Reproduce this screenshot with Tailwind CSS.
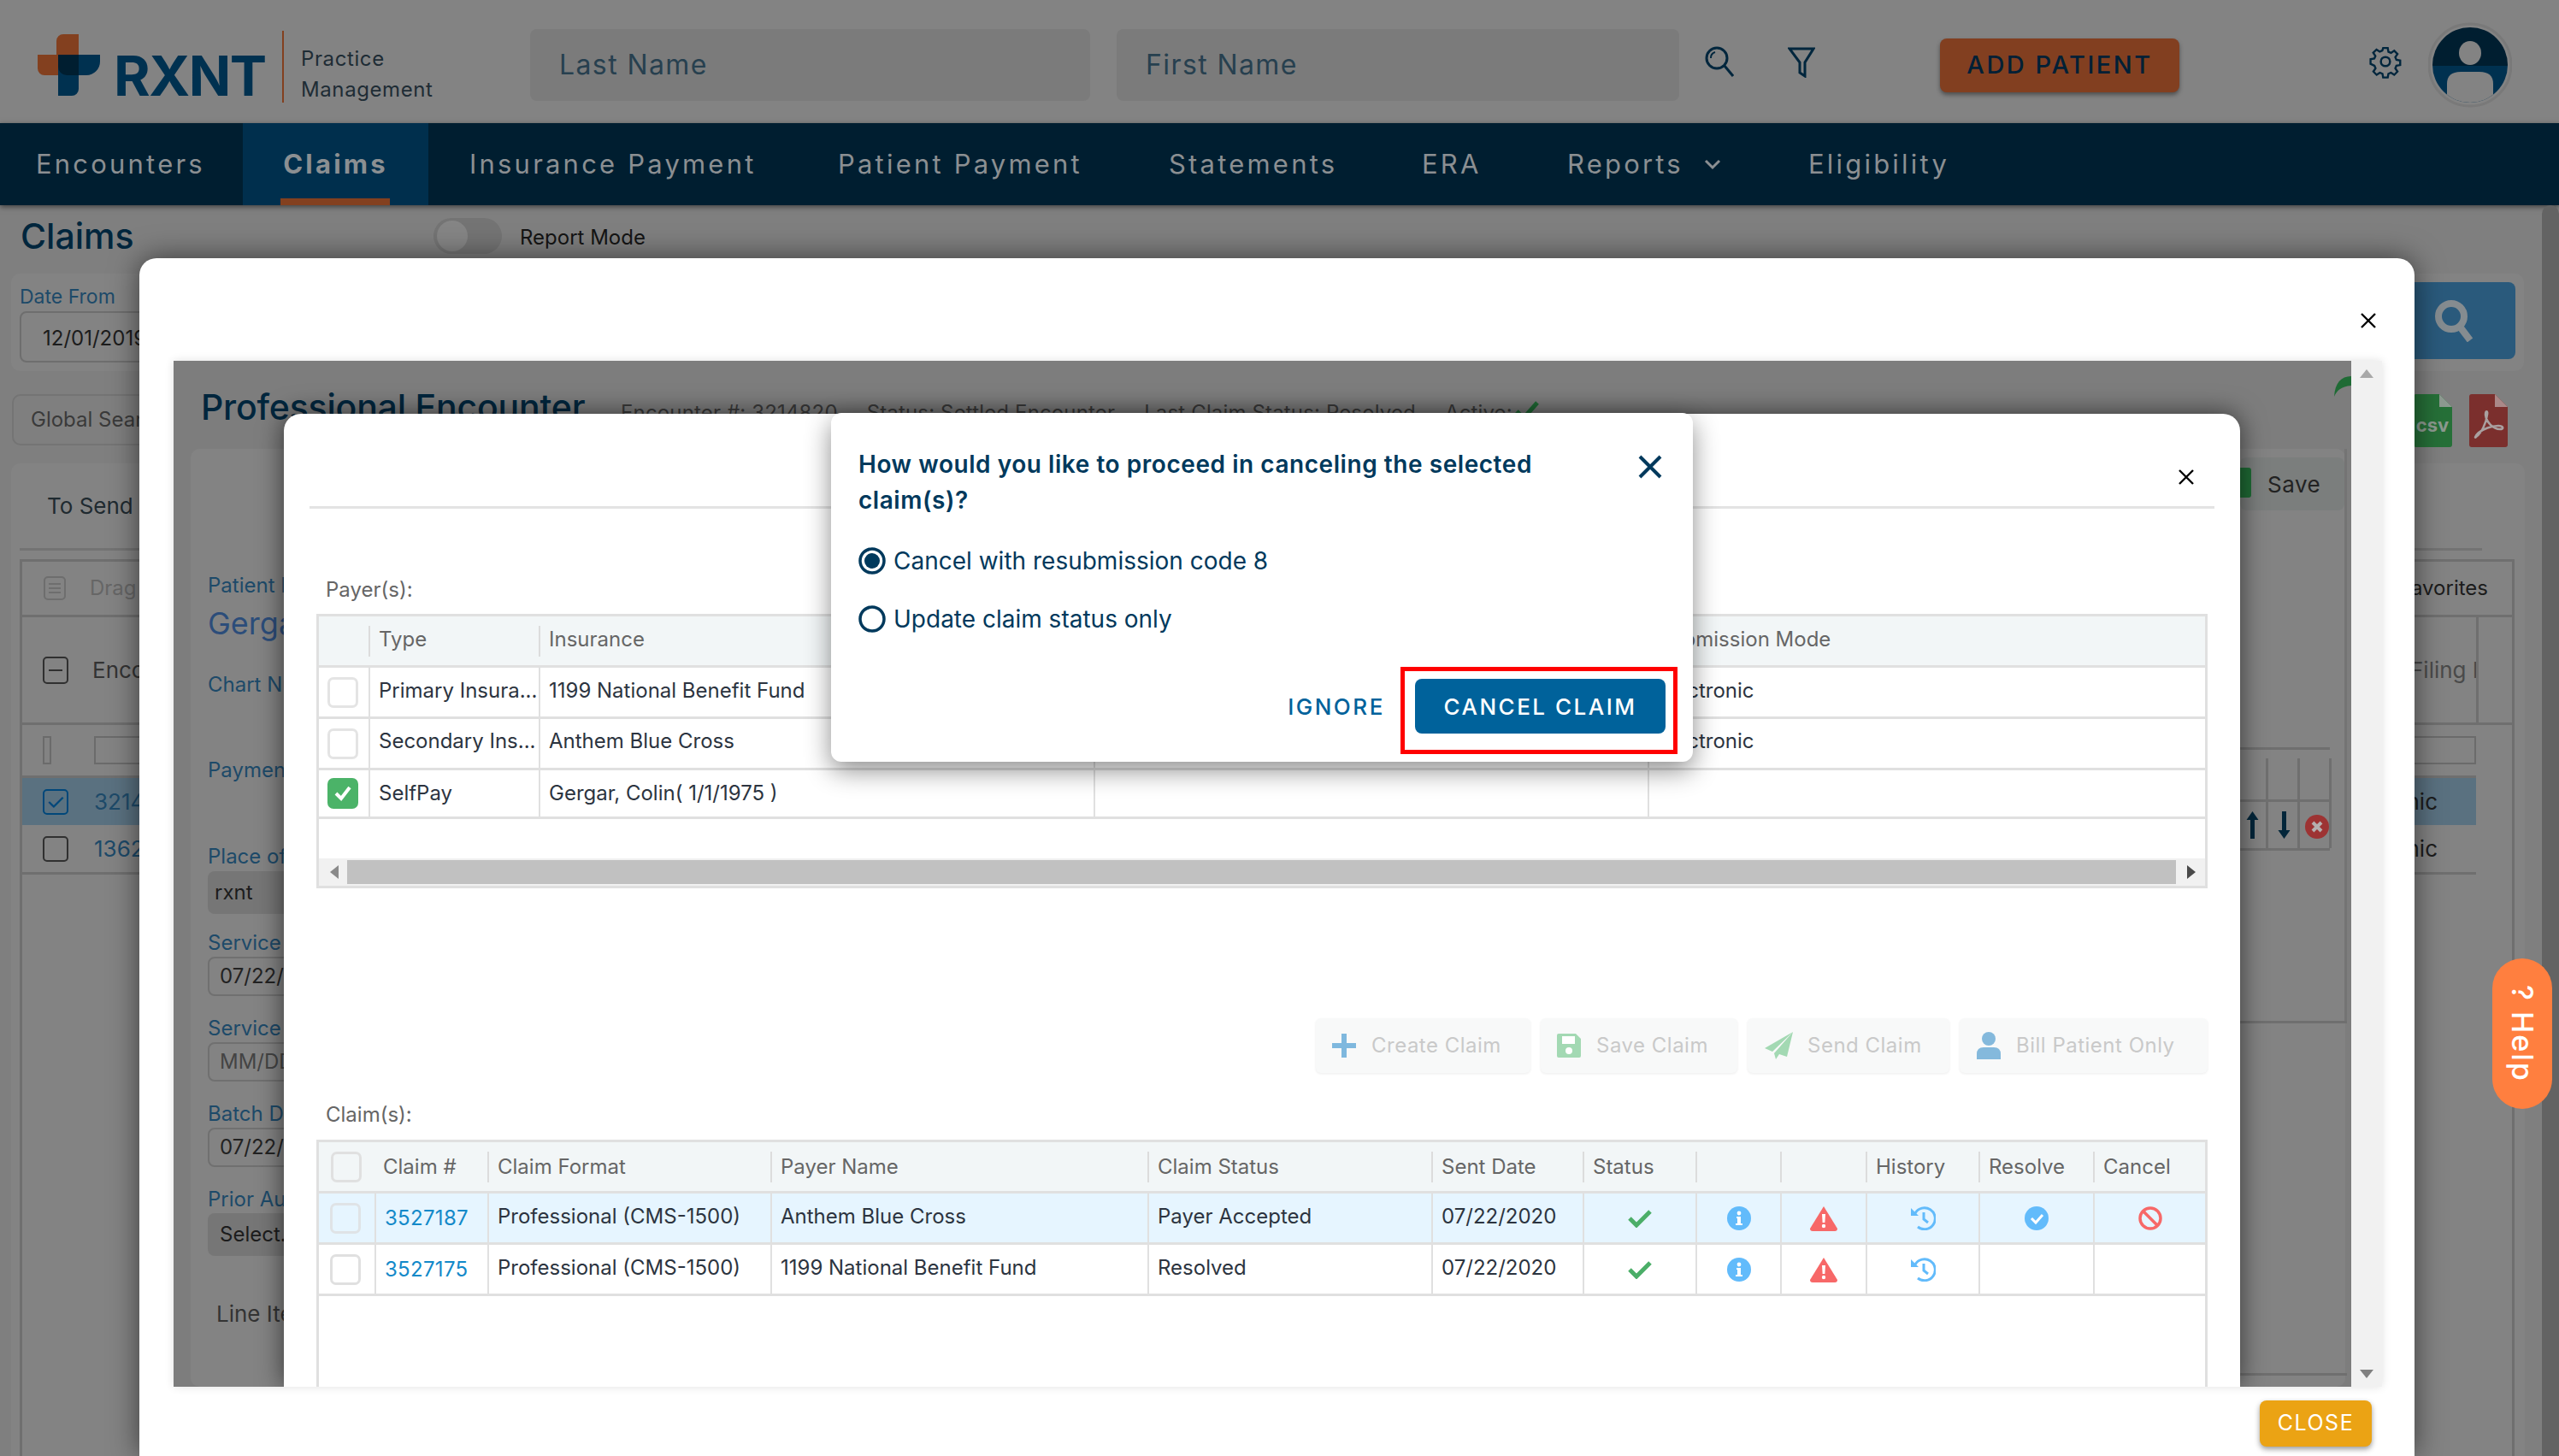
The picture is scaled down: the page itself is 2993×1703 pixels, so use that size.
<!DOCTYPE html>
<html lang="en">
<head>
    <meta charset="UTF-8">
    <meta name="viewport" content="width=device-width, initial-scale=1.0">
    <title>Claims - RXNT</title>
    <script src="https://cdn.jsdelivr.net/npm/@tailwindcss/browser@4"></script>
</head>
<body class="relative w-[2993px] h-[1703px] overflow-hidden bg-[#7f7f7f] font-['Inter',sans-serif] text-[24px] text-[#1c1c1c]">

    <!-- top bar -->
    <header class="flex items-center h-[144px] pt-[8px] bg-[#838383]">
        <svg class="ml-[44px] w-[73px] h-[72px] shrink-0" viewBox="0 0 73 72">
            <path d="M22 8a8 8 0 0 1 8-8h18v48H8a8 8 0 0 1-8-8V24h22z" fill="#83401f"/>
            <path d="M24 24h49v8a16 16 0 0 1-16 16h-9v16a8 8 0 0 1-8 8H24z" fill="#003150"/>
            <path d="M24 24h24v24H34a10 10 0 0 1-10-10z" fill="#001e30"/>
        </svg>
        <div class="ml-[16px] w-[197px] text-[65px] leading-none font-bold tracking-[-1.5px] text-[#003150] mt-[24px]">RXNT</div>
        <div class="w-[2px] h-[84px] bg-[#83401f] mt-[4px]"></div>
        <div class="ml-[20px] w-[268px] mt-[22px] text-[24px] leading-[36px] tracking-[.6px] text-[#1e2c35]">Practice<br>Management</div>
        <div class="flex items-center w-[655px] h-[84px] rounded-[8px] bg-[#7b7b7b] pl-[34px] text-[32px] tracking-[1.4px] text-[#27404f]">Last Name</div>
        <div class="flex items-center w-[658px] h-[84px] ml-[31px] rounded-[8px] bg-[#7b7b7b] pl-[34px] text-[32px] tracking-[1.4px] text-[#27404f]">First Name</div>
        <svg class="ml-[30px] w-[34px] h-[36px] -mt-[8px]" viewBox="0 0 34 36" fill="none" stroke="#00263d" stroke-width="3"><circle cx="14" cy="14" r="12"/><path d="M23 23l10 12"/><path d="M7 14a7 7 0 0 1 5-7" stroke-width="2"/></svg>
        <svg class="ml-[63px] w-[32px] h-[36px] -mt-[6px]" viewBox="0 0 32 36" fill="none" stroke="#00263d" stroke-width="3"><path d="M2 2h28L20 18v16l-6-4V18z"/></svg>
        <button class="ml-[146px] w-[280px] h-[63px] rounded-[8px] bg-[#823f20] shadow-[0_3px_5px_rgba(0,0,0,.4)] text-[29px] font-medium tracking-[2.5px] text-[#002036]">ADD PATIENT</button>
        <svg class="ml-[221px] w-[40px] h-[42px] -mt-[8px]" viewBox="0 0 24 24" fill="none" stroke="#00263d" stroke-width="1.5"><circle cx="12" cy="12" r="3.2"/><path d="M10.3 2h3.4l.5 2.8 1.9.8 2.4-1.6 2.4 2.4-1.6 2.4.8 1.9 2.8.5v3.4l-2.8.5-.8 1.9 1.6 2.4-2.4 2.4-2.4-1.6-1.9.8-.5 2.8h-3.4l-.5-2.8-1.9-.8-2.4 1.6-2.4-2.4 1.6-2.4-.8-1.9L1 13.7v-3.4l2.8-.5.8-1.9L3 5.5l2.4-2.4 2.4 1.6 1.9-.8z" transform="translate(.6 .6) scale(.95)"/></svg>
        <svg class="ml-[30px] w-[98px] h-[100px]" viewBox="0 0 98 100">
            <defs><clipPath id="avatar-clip"><circle cx="49" cy="50" r="44"/></clipPath></defs>
            <circle cx="49" cy="50" r="48" fill="none" stroke="#797979" stroke-width="3"/>
            <g clip-path="url(#avatar-clip)">
                <rect width="98" height="51" fill="#001e30"/>
                <rect y="51" width="98" height="49" fill="#003150"/>
                <ellipse cx="49" cy="36" rx="13" ry="14" fill="#838383"/>
                <path d="M22 100V72Q22 58 38 58H60Q76 58 76 72V100z" fill="#838383"/>
            </g>
        </svg>
    </header>

    <!-- nav -->
    <nav class="flex h-[96px] bg-[#001e30] text-[31px] tracking-[3.2px] text-[#8b8f92] shadow-[0_2px_6px_rgba(0,0,0,.5)]">
        <a class="flex items-center w-[284px] pl-[42px]">Encounters</a>
        <a class="relative flex items-center justify-center w-[217px] bg-[#002f4d] font-bold">Claims<span class="absolute bottom-0 left-[44px] w-[128px] h-[8px] bg-[#83401f]"></span></a>
        <a class="flex items-center w-[479px] pl-[48px]">Insurance Payment</a>
        <a class="flex items-center w-[387px]">Patient Payment</a>
        <a class="flex items-center w-[296px]">Statements</a>
        <a class="flex items-center w-[170px]">ERA</a>
        <a class="flex items-center w-[282px]">Reports
            <svg class="ml-[24px] w-[20px] h-[14px]" viewBox="0 0 20 14" fill="none" stroke="#8b8f92" stroke-width="3"><path d="M2 3l8 8 8-8"/></svg>
        </a>
        <a class="flex items-center">Eligibility</a>
    </nav>

    <!-- page behind the dialogs -->
    <main class="relative px-[13px]">
        <div class="absolute top-0 right-0 w-[20px] h-[1463px] rounded-t-[10px] bg-[#636363]"></div>
        <div class="flex items-center h-[72px] mb-[8px] pl-[11px]">
            <h1 class="w-[483px] text-[41px] leading-none font-medium text-[#00263d]">Claims</h1>
            <span class="flex items-center w-[80px] h-[42px] rounded-full bg-[#747474] pl-[4px]"><span class="w-[36px] h-[36px] rounded-full bg-[#858585]"></span></span>
            <span class="ml-[21px] mt-[4px] text-[24px] text-[#141414]">Report Mode</span>
        </div>
        <section class="flex justify-between w-[2939px] h-[114px] rounded-[10px] bg-[#838383] p-[10px]">
            <div class="w-[140px]">
                <div class="text-[23px] leading-[34px] text-[#1d4a69]">Date From</div>
                <div class="flex items-center w-[400px] h-[60px] rounded-[8px] border-2 border-[#6e6e6e] pl-[25px] pt-[3px] text-[24px]">12/01/2019</div>
            </div>
            <button class="flex items-center justify-center w-[200px] h-[90px] rounded-[8px] bg-[#2a5a7c]">
                <svg class="ml-[60px] w-[50px] h-[50px]" viewBox="0 0 50 50" fill="none" stroke="#858c90" stroke-width="8"><circle cx="20" cy="20" r="15"/><path d="M30 32l12 16"/></svg>
            </button>
        </section>
        <div class="flex justify-between items-start w-[2939px] mt-[27px] h-[81px]">
            <div class="flex items-center w-[300px] h-[60px] ml-[1px] rounded-[10px] border-2 border-[#747474] pl-[20px] text-[#3a3a3a]">Global Search</div>
            <div class="flex gap-[20px] mr-[19px]">
                <svg class="w-[45px] h-[62px]" viewBox="0 0 45 62"><path d="M3 0h27l15 15v44a3 3 0 0 1-3 3H3a3 3 0 0 1-3-3V3a3 3 0 0 1 3-3z" fill="#267038"/><path d="M30 0l15 15H30z" fill="#8e9a91"/><text x="22" y="44" text-anchor="middle" font-size="22" font-weight="700" fill="#8c9a90" font-family="Inter, sans-serif">csv</text></svg>
                <svg class="w-[45px] h-[62px]" viewBox="0 0 45 62"><path d="M3 0h27l15 15v44a3 3 0 0 1-3 3H3a3 3 0 0 1-3-3V3a3 3 0 0 1 3-3z" fill="#7b2f2d"/><path d="M30 0l15 15H30z" fill="#a88"/><path d="M8 50c6-4 12-16 13-26 1-5-2-5-2 0 1 9 9 17 17 17 5 0 4-4-2-4-8 0-18 4-23 8-4 4-5 7-3 5z" fill="none" stroke="#a9a0a0" stroke-width="2.5"/></svg>
            </div>
        </div>
        <section class="w-[2940px] h-[1170px] rounded-[10px] bg-[#838383] px-[10px]">
            <div class="flex items-center h-[102px] border-b-[3px] border-[#737373] w-[2880px] pl-[32px] text-[26px] text-[#1f2a30]">To Send Encounters</div>
            <div class="w-[2918px] mt-[10px] border-[3px] border-[#6f6f6f] h-[1060px]">
                <div class="flex items-center h-[65px] border-b-[3px] border-[#6f6f6f] justify-between">
                    <div class="flex items-center pl-[25px]">
                        <svg class="w-[26px] h-[28px]" viewBox="0 0 26 28" fill="none" stroke="#6e6e6e" stroke-width="2"><rect x="1" y="1" width="24" height="26" rx="4"/><path d="M6 9h14M6 14h14M6 19h14"/></svg>
                        <span class="ml-[28px] text-[#666]">Drag a column here</span>
                    </div>
                    <span class="mr-[28px] text-[24px]">Favorites</span>
                </div>
                <div class="flex h-[126px] border-b-[3px] border-[#6f6f6f]">
                    <div class="flex flex-1 items-center justify-between pl-[24px]">
                        <span class="w-[30px] h-[32px] rounded-[5px] border-2 border-[#303030] flex items-center justify-center"><span class="w-[16px] h-[2px] bg-[#303030]"></span></span>
                        <span class="-ml-[2px] flex-1 pl-[30px] text-[26px] text-[#333]">Encounter #</span>
                        <span class="w-[77px] overflow-hidden whitespace-nowrap text-[26px] text-[#4a4a4a]">Filing Mode</span>
                    </div>
                    <div class="w-[42px] border-l-[3px] border-[#6f6f6f]"></div>
                </div>
                <div class="flex h-[59px] items-center pl-[24px] mr-[42px]">
                    <span class="w-[10px] h-[33px] border-2 border-[#6b6b6b]"></span>
                    <span class="ml-[50px] flex-1 h-[33px] border-2 border-[#6b6b6b]"></span>
                </div>
                <div class="flex h-[58px] items-center bg-[#5a7180] pl-[24px] mr-[42px] border-t-[3px] border-[#6f6f6f] text-[26px]">
                    <span class="w-[30px] h-[30px] rounded-[5px] border-2 border-[#00477a] flex items-center justify-center text-[#00477a]">✓</span>
                    <span class="ml-[30px] flex-1 text-[#1d4a69]">3214820</span>
                    <span class="mr-[45px]">Electronic</span>
                </div>
                <div class="flex h-[58px] items-center pl-[24px] mr-[42px] border-b-[3px] border-[#6f6f6f] text-[26px]">
                    <span class="w-[30px] h-[30px] rounded-[5px] border-2 border-[#303030]"></span>
                    <span class="ml-[30px] flex-1 text-[#1d4a69]">1362540</span>
                    <span class="mr-[45px]">Electronic</span>
                </div>
            </div>
        </section>
    </main>

    <!-- claim details dialog -->
    <div class="absolute left-[163px] top-[302px] w-[2661px] h-[1401px] rounded-t-[20px] bg-white shadow-[0_0_34px_rgba(0,0,0,.55)]">
        <svg class="absolute left-[2598px] top-[64px] w-[18px] h-[18px]" viewBox="0 0 18 18" fill="none" stroke="#000" stroke-width="2.4"><path d="M1 1l16 16M17 1L1 17"/></svg>

        <div class="absolute left-[40px] top-[120px] flex w-[2583px] h-[1200px] shadow-[0_0_10px_rgba(0,0,0,.12)]">
            <div class="relative w-[2547px] h-full overflow-hidden bg-[#7d7d7d]">
                <div class="flex items-baseline gap-[34px] pt-[34px] pl-[32px] text-[24px] tracking-[.15px] text-[#3a3a3a]">
                    <h2 class="w-[457px] text-[41px] leading-none font-medium tracking-[-.2px] text-[#00263d]">Professional Encounter</h2>
                    <span>Encounter #: 3214820</span><span>Status: Settled Encounter</span><span>Last Claim Status: Resolved</span>
                    <span class="flex items-baseline">Active:<svg class="ml-[2px] w-[30px] h-[22px]" viewBox="0 0 30 22"><path d="M3 12l8 8L27 2" fill="none" stroke="#1f6b35" stroke-width="5"/></svg></span>
                </div>
                <svg class="absolute left-[2527px] top-[18px] w-[20px] h-[24px]" viewBox="0 0 20 24" fill="#1f6b35"><path d="M20 0C8 0 1 8 0 24c3-7 8-12 20-13z"/></svg>

                <div class="absolute left-[20px] top-[103px] w-[2520px] h-[1097px] rounded-[10px] bg-[#838383] pl-[20px]">
                    <!-- left form, only its first letters show -->
                    <div class="pt-[144px] text-[24px] leading-[32px] text-[#1d4a69]">
                        <p>Patient Name</p>
                        <p class="mt-[8px] text-[36px] leading-[40px] text-[#2c4d7a]">Gergar, Colin</p>
                        <p class="mt-[36px]">Chart Number</p>
                        <p class="mt-[68px]">Payment Type</p>
                        <p class="mt-[69px]">Place of Service</p>
                        <p class="w-[200px] h-[50px] mt-[1px] rounded-[8px] bg-[#767676] pl-[8px] text-[#1c1c1c] leading-[50px]">rxnt</p>
                        <p class="mt-[18px]">Service From</p>
                        <p class="w-[200px] h-[46px] rounded-[8px] border-2 border-[#707070] pl-[12px] text-[#222] leading-[42px]">07/22/2020</p>
                        <p class="mt-[22px]">Service To</p>
                        <p class="w-[200px] h-[46px] rounded-[8px] border-2 border-[#707070] pl-[12px] text-[#444] leading-[42px]">MM/DD/YYYY</p>
                        <p class="mt-[22px]">Batch Date</p>
                        <p class="w-[200px] h-[46px] rounded-[8px] border-2 border-[#707070] pl-[12px] text-[#222] leading-[42px]">07/22/2020</p>
                        <p class="mt-[22px]">Prior Auth</p>
                        <p class="w-[200px] h-[50px] rounded-[8px] bg-[#767676] pl-[14px] text-[#1c1c1c] leading-[50px]">Select...</p>
                        <p class="mt-[52px] pl-[10px] text-[26px] text-[#333]">Line Items</p>
                    </div>
                </div>

                <div class="absolute left-[2417px] top-[113px] flex items-center w-[122px] h-[62px] rounded-[8px] bg-[#7b7e7d] pl-[32px] text-[26px] tracking-[.5px] text-[#222]">Save</div>
                <div class="absolute left-[2417px] top-[125px] w-[13px] h-[35px] rounded-r-[3px] bg-[#1f6b35]"></div>
                <!-- edge of the line item table right of the inner dialog -->
                <div class="absolute left-[2417px] top-[452px] w-[105px] h-[121px] border-y-[3px] border-[#6f6f6f]">
                    <div class="absolute left-0 top-[58px] w-full h-[3px] bg-[#6f6f6f]"></div>
                    <div class="absolute left-[30px] top-[10px] bottom-0 w-[3px] bg-[#6f6f6f]"></div>
                    <div class="absolute left-[67px] top-[10px] bottom-0 w-[3px] bg-[#6f6f6f]"></div>
                    <div class="absolute left-[104px] top-[10px] bottom-0 w-[3px] bg-[#6f6f6f]"></div>
                    <svg class="absolute left-[7px] top-[72px] w-[15px] h-[32px]" viewBox="0 0 15 32" fill="#03263a"><path d="M7.5 0l7 10H10v22H5V10H.5z"/></svg>
                    <svg class="absolute left-[44px] top-[72px] w-[15px] h-[32px]" viewBox="0 0 15 32" fill="#03263a"><path d="M7.5 32l7-10H10V0H5v22H.5z"/></svg>
                    <svg class="absolute left-[76px] top-[76px] w-[28px] h-[28px]" viewBox="0 0 28 28"><circle cx="14" cy="14" r="14" fill="#9d3333"/><path d="M9 9l10 10M19 9L9 19" stroke="#b5b0b0" stroke-width="4"/></svg>
                </div>
                <div class="absolute left-[2539px] top-[103px] w-[3px] h-[672px] bg-[#747474]"></div>
                <div class="absolute left-[2417px] top-[772px] w-[125px] h-[3px] bg-[#6f6f6f]"></div>
                <div class="absolute left-[2417px] top-[1184px] w-[125px] h-[16px] border-t-[3px] border-[#6f6f6f]"></div>

                <!-- payers / claims dialog -->
                <div class="absolute left-[129px] top-[62px] w-[2288px] h-[1138px] rounded-t-[20px] bg-white shadow-[0_0_30px_rgba(0,0,0,.6)]">
                    <svg class="absolute left-[2216px] top-[65px] w-[18px] h-[18px]" viewBox="0 0 18 18" fill="none" stroke="#000" stroke-width="2.4"><path d="M1 1l16 16M17 1L1 17"/></svg>
                    <div class="mx-[30px] pt-[108px] border-b-[3px] border-[#e3e3e3]"></div>
                    <p class="ml-[49px] mt-[79px] h-[44px] text-[24px] leading-[32px] text-[#666]">Payer(s):</p>

                    <div class="relative ml-[38px] w-[2212px] h-[321px] border-[3px] border-[#e0e0e0] text-[24px] text-[#2c3440]">
                        <div class="grid grid-cols-[58px_199px_649px_648px_1fr] h-[57px] items-center bg-[#f2f6f7] text-[#666]">
                            <span></span>
                            <span class="h-[36px] border-l-[2px] border-[#dcdcdc] pl-[10px] leading-[32px]">Type</span>
                            <span class="h-[36px] border-l-[2px] border-[#dcdcdc] pl-[10px] leading-[32px]">Insurance</span>
                            <span class="h-[36px] border-l-[2px] border-[#dcdcdc] pl-[10px] leading-[32px]">Payer Mode</span>
                            <span class="h-[36px] border-l-[2px] border-[#dcdcdc] pl-[10px] leading-[32px]">Submission Mode</span>
                        </div>
                        <div class="grid grid-cols-[58px_199px_649px_648px_1fr] h-[60px] items-stretch border-t-[3px] border-[#e0e0e0] *:border-l-[2px] *:border-[#e0e0e0] *:pl-[10px] *:leading-[53px]">
                            <span class="!border-l-0 !pl-[10px] flex items-center"><i class="block w-[36px] h-[36px] rounded-[7px] border-[3px] border-[#e4e4e4]"></i></span>
                            <span>Primary Insura...</span><span>1199 National Benefit Fund</span><span></span><span>Electronic</span>
                        </div>
                        <div class="grid grid-cols-[58px_199px_649px_648px_1fr] h-[60px] items-stretch border-t-[3px] border-[#e0e0e0] *:border-l-[2px] *:border-[#e0e0e0] *:pl-[10px] *:leading-[52px]">
                            <span class="!border-l-0 !pl-[10px] flex items-center"><i class="block w-[36px] h-[36px] rounded-[7px] border-[3px] border-[#e4e4e4]"></i></span>
                            <span>Secondary Ins...</span><span>Anthem Blue Cross</span><span></span><span>Electronic</span>
                        </div>
                        <div class="grid grid-cols-[58px_199px_649px_648px_1fr] h-[60px] items-stretch border-y-[3px] border-[#e0e0e0] *:border-l-[2px] *:border-[#e0e0e0] *:pl-[10px] *:leading-[54px]">
                            <span class="!border-l-0 !pl-[10px] flex items-center">
                                <svg class="w-[36px] h-[36px]" viewBox="0 0 36 36"><rect width="36" height="36" rx="7" fill="#4bb368"/><path d="M10 18l6 6 10-13" fill="none" stroke="#fff" stroke-width="4"/></svg>
                            </span>
                            <span>SelfPay</span><span>Gergar, Colin( 1/1/1975 )</span><span></span><span></span>
                        </div>
                        <!-- horizontal scrollbar -->
                        <div class="absolute left-0 right-0 bottom-0 flex items-center h-[32px] bg-[#f1f1f1]">
                            <svg class="ml-[13px] w-[10px] h-[16px]" viewBox="0 0 10 16" fill="#8a8a8a"><path d="M10 0v16L0 8z"/></svg>
                            <div class="ml-[10px] w-[2139px] h-[28px] bg-[#c1c1c1]"></div>
                            <svg class="ml-[13px] w-[10px] h-[16px]" viewBox="0 0 10 16" fill="#4a4a4a"><path d="M0 0v16l10-8z"/></svg>
                        </div>
                    </div>

                    <!-- action buttons -->
                    <div class="flex justify-end gap-[12px] w-[2250px] mt-[152px] text-[24px] tracking-[.5px] text-[#c9c9c9]">
                        <button class="flex items-center w-[251px] h-[64px] rounded-[6px] bg-[#f8f9f9] shadow-[0_1px_3px_rgba(0,0,0,.08)] pl-[19px]">
                            <svg class="w-[28px] h-[28px] shrink-0" viewBox="0 0 28 28" fill="#7fb8de"><path d="M11 0h6v11h11v6H17v11h-6V17H0v-6h11z"/></svg>
                            <span class="ml-[18px]">Create Claim</span>
                        </button>
                        <button class="flex items-center w-[230px] h-[64px] rounded-[6px] bg-[#f8f9f9] shadow-[0_1px_3px_rgba(0,0,0,.08)] pl-[19px]">
                            <svg class="w-[28px] h-[28px] shrink-0" viewBox="0 0 28 28"><path d="M2 0h20l6 6v20a2 2 0 0 1-2 2H2a2 2 0 0 1-2-2V2a2 2 0 0 1 2-2z" fill="#a3d9b3"/><rect x="6" y="3" width="15" height="9" fill="#fff"/><circle cx="14" cy="20" r="4" fill="#fff"/></svg>
                            <span class="ml-[18px]">Save Claim</span>
                        </button>
                        <button class="flex items-center w-[236px] h-[64px] rounded-[6px] bg-[#f8f9f9] shadow-[0_1px_3px_rgba(0,0,0,.08)] pl-[20px]">
                            <svg class="w-[33px] h-[32px] shrink-0" viewBox="0 0 33 32" fill="#a3d9b3"><path d="M33 0L0 19l9 4zM33 0L11 25l2 7 4-6 9 3z"/></svg>
                            <span class="ml-[17px]">Send Claim</span>
                        </button>
                        <button class="flex items-center w-[290px] h-[64px] rounded-[6px] bg-[#f8f9f9] shadow-[0_1px_3px_rgba(0,0,0,.08)] pl-[20px]">
                            <svg class="w-[28px] h-[32px] shrink-0" viewBox="0 0 28 32" fill="#84b9dc"><ellipse cx="14" cy="8" rx="8" ry="8"/><path d="M0 32v-6q0-8 8-8h12q8 0 8 8v6z"/></svg>
                            <span class="ml-[18px]">Bill Patient Only</span>
                        </button>
                    </div>

                    <p class="ml-[49px] mt-[33px] h-[45px] text-[24px] leading-[32px] text-[#666]">Claim(s):</p>

                    <div class="ml-[38px] w-[2212px] h-[289px] border-x-[3px] border-t-[3px] border-[#e0e0e0] text-[24px] text-[#2c3440]">
                        <div class="grid grid-cols-[65px_132px_331px_441px_332px_177px_132px_99px_100px_132px_134px_1fr] h-[57px] items-center bg-[#f2f6f7] text-[#666] *:h-[36px] *:border-l-[2px] *:border-[#dcdcdc] *:pl-[10px] *:leading-[36px]">
                            <span class="!border-l-0 !pl-[14px] !h-[36px]"><i class="block w-[36px] h-[36px] rounded-[7px] border-[3px] border-[#e0e0e0]"></i></span>
                            <span class="!border-l-0">Claim #</span><span>Claim Format</span><span>Payer Name</span><span>Claim Status</span><span>Sent Date</span><span>Status</span><span></span><span></span><span>History</span><span>Resolve</span><span>Cancel</span>
                        </div>
                        <div class="grid grid-cols-[65px_132px_331px_441px_332px_177px_132px_99px_100px_132px_134px_1fr] h-[60px] border-t-[3px] border-[#e0e0e0] bg-[#e6f5ff] *:border-l-[2px] *:border-[#e0e0e0] *:pl-[10px] *:leading-[54px]">
                            <span class="!border-l-0 !pl-[13px] flex items-center"><i class="block w-[36px] h-[36px] rounded-[7px] border-[3px] border-[#dfe3e6]"></i></span>
                            <span class="text-[#1389c9] tracking-[.3px] !leading-[58px]">3527187</span><span>Professional (CMS-1500)</span><span>Anthem Blue Cross</span><span>Payer Accepted</span><span>07/22/2020</span>
                            <span class="!pl-0 flex items-center justify-center"><svg class="w-[28px] h-[22px]" viewBox="0 0 28 22"><path d="M2 11l8 8L26 3" fill="none" stroke="#4bae68" stroke-width="5"/></svg></span>
                            <span class="!pl-0 flex items-center justify-center"><svg class="w-[28px] h-[28px]" viewBox="0 0 28 28"><circle cx="14" cy="14" r="14" fill="#62bbfb"/><circle cx="14" cy="8" r="2.4" fill="#fff"/><path d="M11 12h5v8h2v2h-8v-2h2v-6h-1z" fill="#fff"/></svg></span>
                            <span class="!pl-0 flex items-center justify-center"><svg class="w-[32px] h-[29px]" viewBox="0 0 32 29"><path d="M16 0L32 26q0 3-3 3H3q-3 0-3-3z" fill="#f76868"/><path d="M14 9h4l-.6 10h-2.8z" fill="#fff"/><circle cx="16" cy="23" r="2.2" fill="#fff"/></svg></span>
                            <span class="!pl-0 flex items-center justify-center"><svg class="w-[29px] h-[28px]" viewBox="0 0 29 28" fill="none" stroke="#62bbfb" stroke-width="3"><path d="M5 8a12.5 12.5 0 1 1 3 16"/><path d="M15 7v8l5 4"/><path d="M0 2l9 9H0z" fill="#62bbfb" stroke="none"/></svg></span>
                            <span class="!pl-0 flex items-center justify-center"><svg class="w-[28px] h-[28px]" viewBox="0 0 28 28"><circle cx="14" cy="14" r="14" fill="#62bbfb"/><path d="M8 14l5 5 8-9" fill="none" stroke="#fff" stroke-width="3"/></svg></span>
                            <span class="!pl-0 flex items-center justify-center"><svg class="w-[28px] h-[28px]" viewBox="0 0 28 28" fill="none" stroke="#f76868" stroke-width="3.5"><circle cx="14" cy="14" r="12"/><path d="M6 6l16 16"/></svg></span>
                        </div>
                        <div class="grid grid-cols-[65px_132px_331px_441px_332px_177px_132px_99px_100px_132px_134px_1fr] h-[63px] border-y-[3px] border-[#e0e0e0] *:border-l-[2px] *:border-[#e0e0e0] *:pl-[10px] *:leading-[54px]">
                            <span class="!border-l-0 !pl-[13px] flex items-center"><i class="block w-[36px] h-[36px] rounded-[7px] border-[3px] border-[#e0e0e0]"></i></span>
                            <span class="text-[#1389c9] tracking-[.3px] !leading-[58px]">3527175</span><span>Professional (CMS-1500)</span><span>1199 National Benefit Fund</span><span>Resolved</span><span>07/22/2020</span>
                            <span class="!pl-0 flex items-center justify-center"><svg class="w-[28px] h-[22px]" viewBox="0 0 28 22"><path d="M2 11l8 8L26 3" fill="none" stroke="#4bae68" stroke-width="5"/></svg></span>
                            <span class="!pl-0 flex items-center justify-center"><svg class="w-[28px] h-[28px]" viewBox="0 0 28 28"><circle cx="14" cy="14" r="14" fill="#62bbfb"/><circle cx="14" cy="8" r="2.4" fill="#fff"/><path d="M11 12h5v8h2v2h-8v-2h2v-6h-1z" fill="#fff"/></svg></span>
                            <span class="!pl-0 flex items-center justify-center"><svg class="w-[32px] h-[29px]" viewBox="0 0 32 29"><path d="M16 0L32 26q0 3-3 3H3q-3 0-3-3z" fill="#f76868"/><path d="M14 9h4l-.6 10h-2.8z" fill="#fff"/><circle cx="16" cy="23" r="2.2" fill="#fff"/></svg></span>
                            <span class="!pl-0 flex items-center justify-center"><svg class="w-[29px] h-[28px]" viewBox="0 0 29 28" fill="none" stroke="#62bbfb" stroke-width="3"><path d="M5 8a12.5 12.5 0 1 1 3 16"/><path d="M15 7v8l5 4"/><path d="M0 2l9 9H0z" fill="#62bbfb" stroke="none"/></svg></span>
                            <span></span><span></span>
                        </div>
                    </div>
                </div>
            </div>
            <!-- vertical scrollbar -->
            <div class="flex flex-col justify-between items-center w-[36px] py-[10px] bg-[#f1f1f1]">
                <svg class="w-[16px] h-[10px]" viewBox="0 0 16 10" fill="#a8a8a8"><path d="M0 10h16L8 0z"/></svg>
                <svg class="w-[16px] h-[10px]" viewBox="0 0 16 10" fill="#808080"><path d="M0 0h16L8 10z"/></svg>
            </div>
        </div>

        <button class="absolute left-[2480px] top-[1336px] w-[131px] h-[54px] rounded-[8px] bg-[#eba314] shadow-[0_3px_6px_rgba(0,0,0,.4)] text-[25px] tracking-[1.5px] text-white">CLOSE</button>
    </div>

    <!-- help tab -->
    <div class="absolute left-[2915px] top-[1121px] flex items-center justify-center w-[70px] h-[176px] rounded-full bg-[#ff7f3f] [writing-mode:vertical-rl] text-[34px] font-medium tracking-[2px] text-white">? Help</div>

    <!-- cancel confirm -->
    <div class="absolute left-[972px] top-[483px] w-[1008px] h-[408px] rounded-[12px] bg-white shadow-[0_10px_30px_rgba(0,0,0,.45)] pl-[32px] text-[#00395c]">
        <h3 class="w-[850px] pt-[39px] text-[28px] leading-[42px] font-semibold tracking-[.55px]">How would you like to proceed in canceling the selected claim(s)?</h3>
        <svg class="absolute left-[944px] top-[49px] w-[28px] h-[28px]" viewBox="0 0 28 28" fill="none" stroke="#00395c" stroke-width="4"><path d="M2 2l24 24M26 2L2 26"/></svg>
        <label class="flex items-center mt-[34px] h-[32px] text-[28px]">
            <svg class="w-[32px] h-[32px]" viewBox="0 0 32 32"><circle cx="16" cy="16" r="14" fill="none" stroke="#00395c" stroke-width="3.5"/><circle cx="16" cy="16" r="9" fill="#00395c"/></svg>
            <span class="ml-[9px]">Cancel with resubmission code 8</span>
        </label>
        <label class="flex items-center mt-[36px] h-[32px] text-[28px]">
            <svg class="w-[32px] h-[32px]" viewBox="0 0 32 32"><circle cx="16" cy="16" r="14" fill="none" stroke="#00395c" stroke-width="3.5"/></svg>
            <span class="ml-[9px]">Update claim status only</span>
        </label>
        <div class="absolute left-[533px] top-[297px] flex items-center">
            <button class="w-[116px] -mt-[10px] text-[26px] font-medium tracking-[2.5px] text-[#00629b]">IGNORE</button>
            <div class="ml-[17px] w-[324px] h-[102px] border-[5px] border-[#ff0000] pl-[12px] pt-[9px]">
                <button class="w-[293px] h-[64px] rounded-[8px] bg-[#00629b] text-[26px] font-medium tracking-[2.5px] text-white">CANCEL CLAIM</button>
            </div>
        </div>
    </div>
</body>
</html>
